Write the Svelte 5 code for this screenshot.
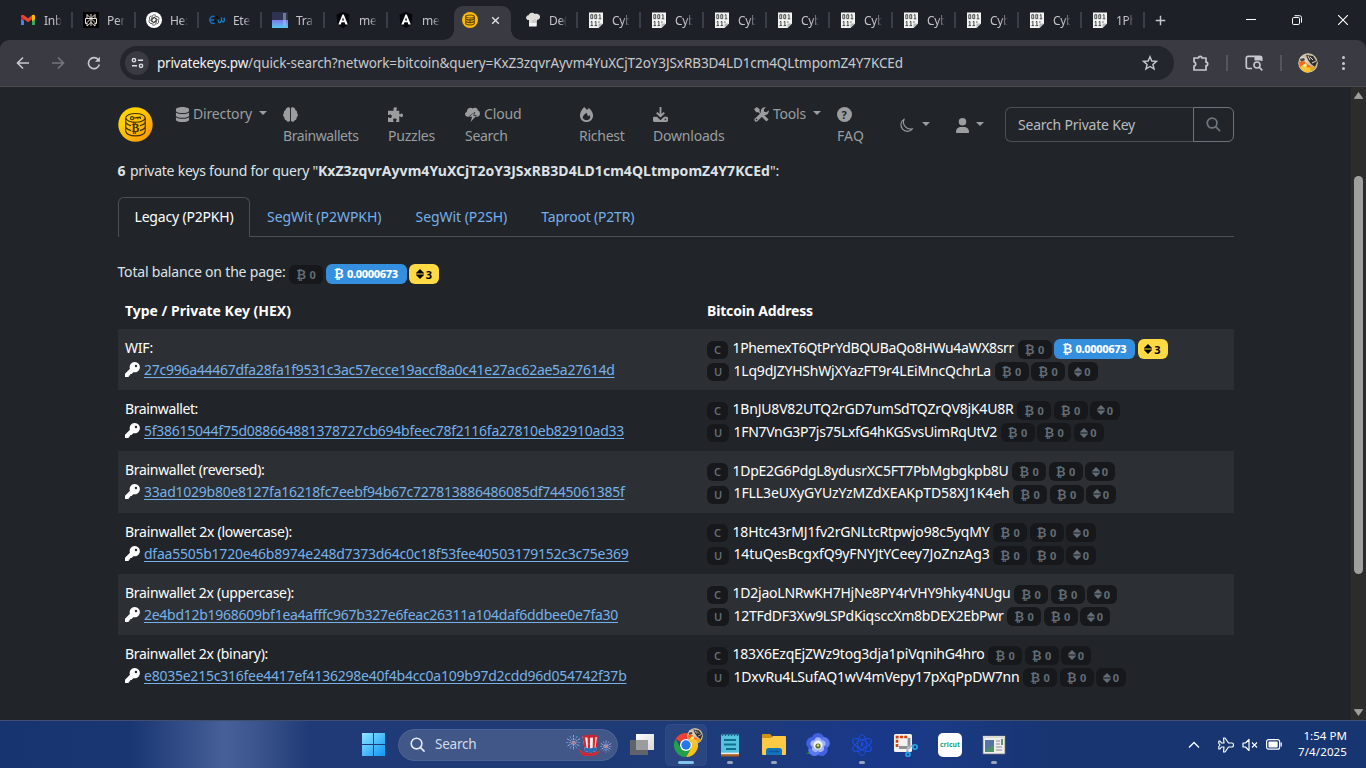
<script>
  // Sets letter spacing so that a label occupies the given advance width.
  function fit(node, width) {
    const n = [...node.textContent].length;
    const natural = node.getBoundingClientRect().width;
    node.style.letterSpacing = (width - natural) / n + 'px';
    node.style.width = width + 'px';
  }

  const leftTabs = [
    ['gmail', 'Inb'], ['perp', 'Per'], ['gpt', 'He:'], ['ete', 'Ete'],
    ['tra', 'Tra'], ['ang', 'me'], ['ang', 'me']
  ];
  const rightTabs = [
    ['chef', 'De('], ...Array(8).fill(['bin', 'Cyb']), ['bin', '1Ph']
  ];
  const rows = [
    { t: 'WIF:', tw: 28, h: '27c996a44467dfa28fa1f9531c3ac57ecce19accf8a0c41e27ac62ae5a27614d', hw: 470.5, c: '1PhemexT6QtPrYdBQUBaQo8HWu4aWX8srr', cw: 281.5, u: '1Lq9dJZYHShWjXYazFT9r4LEiMncQchrLa', uw: 257.5, hot: true },
    { t: 'Brainwallet:', tw: 73, h: '5f38615044f75d088664881378727cb694bfeec78f2116fa27810eb82910ad33', hw: 480, c: '1BnJU8V82UTQ2rGD7umSdTQZrQV8jK4U8R', cw: 281, u: '1FN7VnG3P7js75LxfG4hKGSvsUimRqUtV2', uw: 263.5 },
    { t: 'Brainwallet (reversed):', tw: 139.5, h: '33ad1029b80e8127fa16218fc7eebf94b67c727813886486085df7445061385f', hw: 480.5, c: '1DpE2G6PdgL8ydusrXC5FT7PbMgbgkpb8U', cw: 276, u: '1FLL3eUXyGYUzYzMZdXEAKpTD58XJ1K4eh', uw: 276 },
    { t: 'Brainwallet 2x (lowercase):', tw: 167, h: 'dfaa5505b1720e46b8974e248d7373d64c0c18f53fee40503179152c3c75e369', hw: 484.5, c: '18Htc43rMJ1fv2rGNLtcRtpwjo98c5yqMY', cw: 257, u: '14tuQesBcgxfQ9yFNYJtYCeey7JoZnzAg3', uw: 256 },
    { t: 'Brainwallet 2x (uppercase):', tw: 169, h: '2e4bd12b1968609bf1ea4afffc967b327e6feac26311a104daf6ddbee0e7fa30', hw: 474, c: '1D2jaoLNRwKH7HjNe8PY4rVHY9hky4NUgu', cw: 278, u: '12TFdDF3Xw9LSPdKiqsccXm8bDEX2EbPwr', uw: 270 },
    { t: 'Brainwallet 2x (binary):', tw: 143, h: 'e8035e215c316fee4417ef4136298e40f4b4cc0a109b97d2cdd96d054742f37b', hw: 482.5, c: '183X6EzqEjZWz9tog3dja1piVqnihG4hro', cw: 252, u: '1DxvRu4LSufAQ1wV4mVepy17pXqPpDW7nn', uw: 286 }
  ];
  const nav = [
    ['db', 'Directory', 59, '', 0, true], ['brain', '', 0, 'Brainwallets', 75.5],
    ['puzzle', '', 0, 'Puzzles', 47], ['cloud', 'Cloud', 37.5, 'Search', 42.5],
    ['fire', '', 0, 'Richest', 45.5], ['down', '', 0, 'Downloads', 71.5],
    ['tools', 'Tools', 33, '', 0, true], ['help', '', 0, 'FAQ', 27]
  ];
  const apps = ['task', 'chrome', 'note', 'folder', 'flower', 'atom', 'snip', 'cricut', 'window'];
  const running = ['note', 'folder', 'atom', 'window'];
</script>

{#snippet favicon(k)}
  <svg class="fav" viewBox="0 0 16 16">
    {#if k === 'gmail'}
      <path d="M1 3.5V13h3V7z" fill="#4285f4" /><path d="M15 3.5V13h-3V7z" fill="#34a853" />
      <path d="M1 4.5V7l3 2.2V5z" fill="#c5221f" /><path d="M15 4.5V7l-3 2.2V5z" fill="#fbbc04" />
      <path d="M1 4.6C1 2.5 2.8 2.2 4 3.2L8 6.2l4-3c1.200-1 3-.7 3 1.400L12 7.200 8 10.200 4 7.200z" fill="#ea4335" />
      <path d="M12 3.200c1.200-1 3-.7 3 1.400V7l-3 2.200z" fill="#fbbc04" />
    {:else if k === 'perp'}
      <path d="M0 0h16v16H0z" fill="#000" />
      <path d="M8 2v12M4 2.500l4 4 4-4v4H4zM4 6.500H2.500v5H4M12 6.500h1.500v5H12M8 6.500l-4 4v3.500l4-3.500 4 3.500v-3.500z" fill="none" stroke="#e8e0d4" stroke-width="1" />
    {:else if k === 'gpt'}
      <circle cx="8" cy="8" r="8" fill="#fff" />
      <g fill="none" stroke="#333" stroke-width=".75">
        {#each [0, 60, 120, 180, 240, 300] as a}<path transform="rotate({a} 8 8)" d="M6 8V5a2.300 2.300 0 0 1 4.200-1.200M6 8V6.700l3-1.700" />{/each}
      </g>
    {:else if k === 'ete'}
      <path d="M5.500 4.500C3 3.500.8 5.500.8 8s2.500 4.300 5 3M1 8h4" fill="none" stroke="#1972b8" stroke-width="1.400" />
      <path d="M6.500 6C8 3.500 9.500 5 9 8s-3 3-2.500 0" fill="none" stroke="#0c1119" stroke-width="1.400" />
      <path d="M15 5.500c1 4-1 6-2.500 3C11 12 9 11 9 7.500M12.500 5.500v3" fill="none" stroke="#1680c8" stroke-width="1.300" />
    {:else if k === 'tra'}
      <defs><linearGradient id="tg" x2="0" y2="1"><stop stop-color="#7c78ee" /><stop offset="1" stop-color="#55cbee" /></linearGradient></defs>
      <path d="M0 0h16v8H0z" fill="#2e3450" /><path d="M0 8h16v8H0z" fill="url(#tg)" /><path d="M11 1h3v13h-3z" fill="#b7bdd7" opacity=".5" />
    {:else if k === 'ang'}
      <path d="M8 0l6.500 2.500-1 10L8 16l-5.500-3.500-1-10z" fill="#05070b" />
      <path d="M7.500 2.500h1.300l4 10h-2.400L9.600 10.300H6.500l-.8 2.200H3.300l4.200-10zM8 5.300L7.100 8.400h1.900z" fill="#fff" fill-rule="evenodd" />
    {:else if k === 'coin'}
      <circle cx="8" cy="8" r="8" fill="#fdbb08" />
      <g fill="none" stroke="#5f4400" stroke-width="1.100"><ellipse cx="8" cy="4.500" rx="4.300" ry="1.500" /><path d="M3.700 4.500v7c1 2 7.600 2 8.600 0v-7M4 7c2 1.500 6 1.500 8 0M4 9.500c2 1.500 6 1.500 8 0M8 7v4" /></g>
    {:else if k === 'chef'}
      <path d="M4 14V8C.5 8.500 0 3.500 3.500 3.200 5 .2 8.500.3 9.500 2c3-1 6.200 1 5.500 3.500-.5 2-2 2.500-3 2.300L11.500 14z" fill="#deddd9" /><path d="M4 11h7.500v3.500H4z" fill="#f3f3f3" />
      <path d="M8 8v3M10 7v4" stroke="#aaa" stroke-width=".6" />
    {:else}
      <path d="M1 .5h14v11L10.500 16H1z" fill="#f4f5f2" /><path d="M10.500 16v-4.500H15z" fill="#b4baba" />
      <g fill="none" stroke="#343a3c" stroke-width=".9"><path d="M2.800 2.700h1.900v4H2.800zM6.800 2.700h1.900v4H6.800zM10.800 3.200l1.200-.7V6.700M10.700 6.800h2.600M2.700 10l1.200-.7V13.500M2.500 13.600h2.600M6.700 10l1.200-.7V13.500M6.500 13.600h2.600M10.900 9.300v1.500" /></g>
    {/if}
  </svg>
{/snippet}

{#snippet ni(k)}
  <svg class="ni" viewBox="0 0 16 16" fill="currentColor">
    {#if k === 'db'}
      <path d="M15 2.500V4c0 1.400-3.100 2.500-7 2.500S1 5.400 1 4V2.500C1 1.100 4.100 0 8 0s7 1.100 7 2.500zM15 5.800V9c0 1.400-3.100 2.500-7 2.500S1 10.400 1 9V5.800c3 2.200 11 2.200 14 0zM15 10.800v2.700c0 1.400-3.100 2.500-7 2.500s-7-1.100-7-2.500v-2.700c3 2.200 11 2.200 14 0z" />
    {:else if k === 'brain'}
      <path d="M7.500 1.500v13c0 1.200-2.700 2-3.800-.2C2 14 1.200 12.600 1.500 11.100-.3 10-.2 7.600 1 6.700.6 5 1.500 3.700 2.800 3.200 3-.1 7.200-.8 7.500 1.500zM8.500 1.500v13c0 1.200 2.700 2 3.800-.2 1.700-.3 2.500-1.700 2.200-3.200 1.800-1.100 1.700-3.500.5-4.400.4-1.700-.5-3-1.800-3.500C13-.1 8.800-.8 8.500 1.500z" />
    {:else if k === 'puzzle'}
      <path d="M6 3C4.500.5 9.500-.8 9.500 1.700 9.500 2.800 8.700 3 9 4h3v3.500c1 .5 1.500-.7 2.500-.7 2 0 2 4 0 4-1 0-1.500-1.200-2.500-.7V16H8.500c-.3-1.200.8-1.300.8-2.300 0-2-4-2-4 0 0 1 1 1.100.7 2.300H0v-5c1-.5 1.500.8 2.500.8C4.500 11.800 4.500 8 2.500 8 1.500 8 1 9 0 8.500V4h6z" />
    {:else if k === 'cloud'}
      <path d="M4 10.500C-1 11-.8 5.300 2 5.200 1.500 1.500 6-.5 8 1.500c4-1.800 6 .7 5.500 2.200 3.500.5 3.200 6.300-.5 6.800l-1.500.2 1-2.200H9.800L11 5 5 9l-.5 1.500z" /><path d="M9.500 6l-5 4.500h3L6 16l6-6.700H9z" />
    {:else if k === 'fire'}
      <path fill-rule="evenodd" d="M5.500 0c1.300 1 2.300 2 3 3.200L10.500 1C13.500 3.500 15 6.500 15 9c0 4-3 7-7 7s-7-3-7-7c0-3 2-6.500 4.500-9zM8 6C5.500 8 4 9.500 4 11c0 4 8 4 8 0 0-1-.5-2-1-2.500L9.700 10z" />
    {:else if k === 'down'}
      <path d="M7 0h2v7.500l2.300-2.300 1.400 1.400L8 11.300 3.300 6.600l1.400-1.400L7 7.500z" /><path fill-rule="evenodd" d="M1.500 10.500h2.700L8 14l3.800-3.500h2.700c1 0 1.500.7 1.500 1.500v2.500c0 1-.5 1.500-1.500 1.500h-13C.5 16 0 15.500 0 14.500V12c0-1 .5-1.500 1.500-1.500zM12.500 12.500v1.500H14v-1.500z" />
    {:else if k === 'tools'}
      <path d="M3 0l3 2.500V5l3 3 1-.3 5.500 5.500-2.300 2.300L8 10.200V8.500L4.700 5.500H2.500L0 2.500z" /><path d="M15.700 3.500A4.500 4.500 0 0 1 10 8.700l-6.300 6.600A2.100 2.100 0 0 1 .7 12.500L7.500 6A4.400 4.400 0 0 1 12.700.3L10.400 2.700l.5 2.400 2.400.5z" /><path d="M1.700 13.300l1-1 1 1-1 1z" fill="#212529" />
    {:else}
      <circle cx="8" cy="8" r="8" />
    {/if}
  </svg>
{/snippet}

{#snippet key()}
  <svg class="key" viewBox="0 0 16 16"><path fill="#fff" fill-rule="evenodd" d="M10.500 0a5.400 5.400 0 0 0-5.200 7.200L0 12.500V16h4v-1.700h1.500v-1.500H7l1.900-2A5.500 5.500 0 1 0 10.500 0zm1.200 3a1.300 1.300 0 1 1 0 2.600 1.300 1.300 0 0 1 0-2.600z" /></svg>
{/snippet}

{#snippet updown()}
  <svg class="ud" viewBox="0 0 8 10"><path fill="currentColor" d="M4 0l4 4v.6H0V4zM4 10L0 6v-.6h8V6z" /></svg>
{/snippet}

{#snippet badges(hot)}
  <span class="badge"><i>₿</i>0</span>
  <span class="badge" class:blue={hot}><i>₿</i>{hot ? '0.0000673' : '0'}</span>
  <span class="badge small" class:yellow={hot}>{@render updown()}{hot ? '3' : '0'}</span>
{/snippet}

{#snippet face()}
  <svg class="face" viewBox="0 0 20 20">
    <circle cx="10" cy="10" r="10" fill="#c9bca3" />
    <path d="M3 3l7 3 1 5-5-2-5 3z" fill="#d9d2c2" /><path d="M2 6l4-1 1 2-4 2z" fill="#4a4440" /><path d="M8 2l7 1 4 6-2 5-4-3-3-4z" fill="#312d2a" />
    <path d="M1 9l5-1 4 4 3 1-2 5-5-1-4-3z" fill="#f36a1c" /><path d="M2 14l4-3 3 3 5 1-2 4-5 1z" fill="#fbc62b" />
    <path d="M5 12l3-2 1 3-3 1z" fill="#fff0a0" /><path d="M13 13l5 1-3 4-3-1z" fill="#d9a52f" /><path d="M12 4l3 3M14 10l4-2M10 3l2 4" stroke="#d8d8d8" />
  </svg>
{/snippet}

<div class="screen">
  <header class="strip">
    {#each leftTabs as [k, t]}
      <div class="tab">{@render favicon(k)}<span>{t}</span></div>
    {/each}
    <div class="tab active">
      {@render favicon('coin')}
      <svg class="x" viewBox="0 0 10 10"><path d="M1.300 1.300l7.400 7.400M8.700 1.300L1.300 8.700" stroke="#dfe1e5" stroke-width="1.500" /></svg>
    </div>
    {#each rightTabs as [k, t]}
      <div class="tab">{@render favicon(k)}<span>{t}</span></div>
    {/each}
    <svg class="plus" viewBox="0 0 12 12"><path d="M6 .8v10.400M.8 6h10.400" stroke="#c4c7cc" stroke-width="1.600" /></svg>
    <div class="win">
      <svg viewBox="0 0 10 10"><path d="M0 4.500h10" stroke="#fff" /></svg>
      <svg viewBox="0 0 10 10" fill="none" stroke="#fff"><rect x=".5" y="2.500" width="7" height="7" rx="1.300" /><path d="M2.500.7h5q2 0 2 2v5" /></svg>
      <svg viewBox="0 0 10 10"><path d="M0 0l10 10M10 0L0 10" stroke="#fff" stroke-width="1.100" /></svg>
    </div>
  </header>

  <div class="toolbar">
    <svg class="tb back" viewBox="0 0 14 14"><path d="M13 7H2M7 1.500L1.500 7 7 12.500" fill="none" stroke="#c7c9d0" stroke-width="1.600" /></svg>
    <svg class="tb fwd" viewBox="0 0 14 14"><path d="M1 7h11M7 1.500L12.500 7 7 12.500" fill="none" stroke="#75767c" stroke-width="1.600" /></svg>
    <svg class="tb rel" viewBox="0 0 14 14"><path d="M12.300 8.500A5.500 5.500 0 1 1 11.500 4" fill="none" stroke="#c7c9d0" stroke-width="1.600" /><path d="M12.900.8v5H8z" fill="#c7c9d0" /></svg>
    <div class="omni">
      <div class="site"><svg viewBox="0 0 14 12" fill="none" stroke="#dcdee3" stroke-width="1.500"><circle cx="3.200" cy="3" r="1.800" /><path d="M7.500 3H13M1 9h5.500" /><circle cx="10.800" cy="9" r="1.800" /></svg></div>
      <div class="url"><span class="host" use:fit={91}>privatekeys.pw</span><span use:fit={655}>/quick-search?network=bitcoin&amp;query=KxZ3zqvrAyvm4YuXCjT2oY3JSxRB3D4LD1cm4QLtmpomZ4Y7KCEd</span></div>
      <svg class="star" viewBox="0 0 16 16"><path d="M8 1.700l1.800 4.300 4.700.4-3.600 3 1.200 4.600L8 11.500 3.900 14l1.200-4.600-3.600-3L6.200 6z" fill="none" stroke="#c7c9d0" stroke-width="1.400" /></svg>
    </div>
    <svg class="ext" viewBox="0 0 18 18"><path d="M2 4h4.500a1.700 1.700 0 0 1 3.400 0H14v4.200a1.700 1.700 0 0 1 0 3.400V16H2v-3.900a2.200 2.200 0 0 0 0-4.300z" fill="none" stroke="#c7c9d0" stroke-width="1.700" stroke-linejoin="round" /></svg>
    <i class="div"></i>
    <svg class="lens" viewBox="0 0 18 16"><path d="M7 13.500H3A1.700 1.700 0 0 1 1.300 12V3A1.700 1.700 0 0 1 3 1.300h12A1.700 1.700 0 0 1 16.700 3v3" fill="none" stroke="#c7c9d0" stroke-width="1.700" /><path d="M9.500 1H17v4.500H9.500z" fill="#c7c9d0" /><circle cx="12" cy="10" r="3" fill="none" stroke="#c7c9d0" stroke-width="1.600" /><path d="M14 12l3.300 3.300" stroke="#c7c9d0" stroke-width="1.700" /></svg>
    <i class="div two"></i>
    <div class="avatar">{@render face()}</div>
    <div class="dots"><b></b><b></b><b></b></div>
  </div>

  <div class="view">
    <main>
      <nav>
        <svg class="logo" viewBox="0 0 36 36">
          <defs><linearGradient id="lg" x2="1" y2="1"><stop offset=".3" stop-color="#ffcf00" /><stop offset="1" stop-color="#ff8f08" /></linearGradient></defs>
          <circle cx="18" cy="18" r="17.700" fill="url(#lg)" />
          <g fill="none" stroke="#40300a" stroke-width="1.200"><ellipse cx="18" cy="11.200" rx="10" ry="4.500" /><path d="M8 11.200v14c2 6 18 6 20 0v-14M8 16c1 1.500 3 2.700 5.500 3.300M28 16c-1 1.500-3 2.700-5.500 3.300M8 21c1 1.500 3 2.700 5.500 3.300M28 21c-1 1.500-3 2.700-5.500 3.300" /><circle cx="14.500" cy="11.500" r="1.600" /><path d="M16 11.500l7-1v1.800M20.500 11v1.500" /></g>
          <text x="18" y="26" text-anchor="middle" font-size="12" font-weight="700" font-family="DejaVu Sans" fill="#40300a">₿</text>
        </svg>
        {#each nav as [k, a, aw, b, bw, caret]}
          <div class="item {k}">
            <div class="l1"><span class="ib">{@render ni(k)}{#if k === 'help'}<em>?</em>{/if}</span>{#if a}<span use:fit={aw}>{a}</span>{/if}{#if caret}<i class="caret"></i>{/if}</div>
            {#if b}<div class="l2"><span use:fit={bw}>{b}</span></div>{/if}
          </div>
        {/each}
        <div class="ic moon"><svg viewBox="0 0 16 16"><path d="M5.500 1.200A7 7 0 1 0 14.600 11.500 7.500 7.500 0 0 1 5.500 1.200z" fill="none" stroke="currentColor" stroke-width="1.200" stroke-linejoin="round" /></svg><i class="caret"></i></div>
        <div class="ic user"><svg viewBox="0 0 16 16" fill="currentColor"><circle cx="8" cy="4" r="4" /><path d="M1 15c0-3.500 2.500-5.500 5.500-5.500h3c3 0 5.500 2 5.500 5.500 0 .6-.4 1-1 1H2c-.6 0-1-.4-1-1z" /></svg><i class="caret"></i></div>
        <div class="search"><div class="field"><span use:fit={117}>Search Private Key</span></div><div class="go"><svg viewBox="0 0 16 16" fill="none" stroke="#6c757d" stroke-width="1.900"><circle cx="6.500" cy="6.500" r="5.200" /><path d="M10.300 10.300L15 15" /></svg></div></div>
      </nav>

      <p class="found"><b use:fit={8.5}>6</b><span class="mid" use:fit={188}>private keys found for query "</span><b use:fit={452}>KxZ3zqvrAyvm4YuXCjT2oY3JSxRB3D4LD1cm4QLtmpomZ4Y7KCEd</b><span use:fit={9}>":</span></p>

      <div class="tabs">
        <div class="pt on"><span use:fit={99}>Legacy (P2PKH)</span></div>
        <div class="pt"><span use:fit={114.500}>SegWit (P2WPKH)</span></div>
        <div class="pt"><span use:fit={91.750}>SegWit (P2SH)</span></div>
        <div class="pt"><span use:fit={93}>Taproot (P2TR)</span></div>
      </div>

      <div class="total"><span class="tt" use:fit={168}>Total balance on the page:</span>{@render badges(true)}</div>

      <div class="thead"><div><b use:fit={166}>Type / Private Key (HEX)</b></div><div><b use:fit={106}>Bitcoin Address</b></div></div>
      <div class="rows">
        {#each rows as r}
          <div class="row">
            <div class="kcol">
              <div class="ln"><span use:fit={r.tw}>{r.t}</span></div>
              <div class="ln">{@render key()}<a href="#key" use:fit={r.hw}>{r.h}</a></div>
            </div>
            <div class="acol">
              <div class="ln"><span class="badge cu">C</span><span class="ad" use:fit={r.cw}>{r.c}</span>{@render badges(r.hot)}</div>
              <div class="ln"><span class="badge cu u">U</span><span class="ad" use:fit={r.uw}>{r.u}</span>{@render badges(false)}</div>
            </div>
          </div>
        {/each}
      </div>
    </main>
    <div class="scroll">
      <svg viewBox="0 0 9 7"><path d="M4.500.5L8.700 6.500H.3z" fill="#9f9f9f" stroke="#9f9f9f" stroke-linejoin="round" stroke-width=".8" /></svg>
      <div class="thumb"></div>
      <svg class="dn" viewBox="0 0 9 7"><path d="M4.500 6.500L8.700.5H.3z" fill="#9f9f9f" stroke="#9f9f9f" stroke-linejoin="round" stroke-width=".8" /></svg>
    </div>
  </div>

  <footer>
    <svg class="start" viewBox="0 0 23 23">
      <defs><linearGradient id="wg" x2="1" y2="1"><stop stop-color="#8fe6ff" /><stop offset="1" stop-color="#0f94f4" /></linearGradient></defs>
      <path d="M0 0h11v11H0zM12 0h11v11H12zM0 12h11v11H0zM12 12h11v11H12z" fill="url(#wg)" />
    </svg>
    <div class="tsearch">
      <svg class="mag" viewBox="0 0 16 16" fill="none" stroke="#e6eaf3" stroke-width="1.700"><circle cx="7" cy="7" r="5.700" /><path d="M11 11l4 4" stroke-linecap="round" /></svg>
      <span use:fit={41.500}>Search</span>
      <svg class="hat" viewBox="0 0 48 22">
        {#each [[8.500, 8.500, 7.500], [41, 12.500, 6]] as [x, y, r]}
          {#each [0, 30, 60, 90, 120, 150] as a}<path transform="rotate({a} {x} {y})" d="M{x - r} {y}h{2 * r}" stroke={a % 60 ? '#a8bce8' : '#7894d4'} stroke-width=".8" stroke-dasharray="2.200 .7" />{/each}
          <circle cx={x} cy={y} r="1.200" fill="#e87878" />
        {/each}
        <path d="M14 15c3 6 17 6 21 1l-3 4c-4 2.500-12 2.500-15 .5z" fill="#c72431" stroke="#d8303a" />
        <path d="M17.500 2.500c4-1.500 12-1.500 15.500 0L31 17c-3 1.500-8 1.500-11 0z" fill="#f4eeee" />
        <path d="M17.500 2.500l2.500 0 1.500 11h-2.300zM22.500 2h2.500v12h-2zM28 2h2.500l-1 12h-1.800zM32 2.300h1.500L32 13.500h-1.500z" fill="#d92631" />
        <path d="M19.300 13c3 1.500 9 1.500 12.500 0l-.6 4c-3 1.500-8.500 1.500-11.400 0z" fill="#2b68b5" /><ellipse cx="25.300" cy="2.300" rx="7.800" ry="1.500" fill="#c52430" />
      </svg>
    </div>
    {#each apps as k}
      <div class="app {k}">
        <svg viewBox="0 0 24 24">
          {#if k === 'task'}
            <defs><linearGradient id="vg" x2="1" y2="1"><stop stop-color="#fff" /><stop offset="1" stop-color="#d8d8d8" /></linearGradient></defs>
            <path d="M0 7h18v15H0z" fill="#60636a" /><path d="M6 1h18v16H6z" fill="url(#vg)" /><path d="M6 7h12v10H6z" fill="#9b9c9e" />
          {:else if k === 'chrome'}
            <path d="M12 12L1.600 6A12 12 0 0 1 22.400 6z" fill="#ea4335" /><path d="M22.400 6A12 12 0 0 1 12 24l5-9L12 6z" fill="#fbc116" /><path d="M1.600 6A12 12 0 0 0 12 24l5.200-9H6.800z" fill="#229f4b" />
            <circle cx="12" cy="12" r="6" fill="#fff" /><circle cx="12" cy="12" r="4.700" fill="#2678e8" />
          {:else if k === 'note'}
            <path d="M3 1.500h18V21H3z" fill="#56c3de" /><path d="M3 21h18v2.500H3z" fill="#a85c20" /><path d="M3 19.700h18v1.500H3z" fill="#eee" /><path d="M4.500 0v3M7.500 0v3M10.500 0v3M13.500 0v3M16.500 0v3M19.500 0v3" stroke="#1d5c84" stroke-width="1.200" /><path d="M6 7h12M6 11.500h12M8 16h10" stroke="#126e91" stroke-width="1.800" />
          {:else if k === 'folder'}
            <path d="M0 2q0-1 1-1h7l2 2v5H0z" fill="#d69010" /><path d="M0 5h9l2-2h12q1 0 1 1v17q0 1-1 1H1q-1 0-1-1z" fill="#fdca46" /><path d="M4 22v-4.500Q4 15 6.500 15h11q2.500 0 2.500 2.500V22z" fill="#1473bd" /><path d="M7 18.500h10" stroke="#0c5998" stroke-width="1.500" />
          {:else if k === 'flower'}
            <path d="M0 21l6-5 3 5zM14 23l3-4 1 4z" fill="#297b46" />
            {#each [0, 72, 144, 216, 288] as a}<ellipse transform="rotate({a} 12 12)" cx="12" cy="5.500" rx="6" ry="5.500" fill={a % 144 ? '#5a78ef' : '#4160e2'} />{/each}
            {#each [0, 72, 144, 216, 288] as a}<ellipse transform="rotate({a} 12 12)" cx="12" cy="8" rx="3.500" ry="3.800" fill="#a3b6fa" />{/each}
            <circle cx="12" cy="12" r="4.500" fill="#eef2ee" /><circle cx="12" cy="13" r="2.600" fill="#526f39" /><circle cx="12" cy="12.500" r="1.200" fill="#e7d760" />
          {:else if k === 'atom'}
            <g fill="none" stroke="#1c4fe0" stroke-width="1"><ellipse cx="12" cy="12" rx="10.500" ry="4.500" transform="rotate(90 12 12)" /><ellipse cx="12" cy="12" rx="10.500" ry="4.500" transform="rotate(30 12 12)" /><ellipse cx="12" cy="12" rx="10.500" ry="4.500" transform="rotate(150 12 12)" /></g><path d="M12 7l4.500 1.500v4L12 17l-4.500-4.500v-4z" fill="#1d3a91" stroke="#1c4fe0" /><path d="M10.800 9.500h2.400v3.800h-2.400z" fill="#1c4fe0" />
          {:else if k === 'snip'}
            <rect width="18" height="18" y="1" rx="1.500" fill="#f4f2f1" /><path d="M3 14V4h11" fill="none" stroke="#d0410f" stroke-width="2.600" stroke-dasharray="3 1.300" /><path d="M15 5v10.500M5 14.500h10" stroke="#8d9297" stroke-width="2.800" /><path d="M14 14l6-1.500M14 14l-1 5" stroke="#b4babf" stroke-width="2" /><circle cx="21" cy="14" r="2.200" fill="none" stroke="#239ee5" stroke-width="1.800" /><circle cx="14" cy="21.500" r="2" fill="none" stroke="#239ee5" stroke-width="1.800" />
          {:else if k === 'cricut'}
            <rect width="24" height="24" rx="5" fill="#fff" /><text x="12" y="14" text-anchor="middle" font-size="6.800" font-weight="700" fill="#20a876" textLength="20">cricut</text>
          {:else}
            <path d="M1 3h22v18H1z" fill="#eeeeec" stroke="#777" stroke-width=".7" /><path d="M1 3h22v2H1z" fill="#d9d9d6" /><path d="M3 7h9v12H3z" fill="#4e9164" /><path d="M3 7h9v5l-9 5z" fill="#5675a3" /><path d="M14 8h4M14 11h4M14 14h6M14 17h6" stroke="#aeb0ad" stroke-width="1.300" /><path d="M20 6v6" stroke="#347447" stroke-width="1.500" />
          {/if}
        </svg>
        {#if k === 'chrome'}<div class="mini">{@render face()}</div>{/if}
        {#if k === 'chrome' || running.includes(k)}<i class="run" class:wide={k === 'chrome'}></i>{/if}
      </div>
    {/each}
    <div class="tray">
      <svg class="chev" viewBox="0 0 12 8"><path d="M1 6.500l5-5 5 5" fill="none" stroke="#fff" stroke-width="1.300" /></svg>
      <svg class="plane" viewBox="0 0 16 16"><path d="M6 6L5.500 1H7l3.500 5H14q1.500 0 1.500 2T14 10h-3.500L7 15H5.500L6 10H3.500L2 12H.8V9.500L2 8 .8 6.500V4H2l1.500 2z" fill="none" stroke="#fff" stroke-width="1.200" stroke-linejoin="round" /></svg>
      <svg class="spk" viewBox="0 0 16 14"><path d="M1 5h2.500L7 1.500v11L3.500 9H1z" fill="none" stroke="#fff" stroke-width="1.200" stroke-linejoin="round" /><path d="M10 4.500l5 5M15 4.500l-5 5" stroke="#fff" stroke-width="1.100" /></svg>
      <svg class="bat" viewBox="0 0 16 11"><rect x=".6" y=".6" width="13" height="9.600" rx="2" fill="none" stroke="#fff" stroke-width="1.200" /><rect x="2.500" y="2.500" width="9.200" height="5.900" rx=".6" fill="#fff" /><path d="M15.200 3.500v4" stroke="#fff" stroke-width="1.300" /></svg>
      <div class="clock"><span use:fit={43.500}>1:54 PM</span><span use:fit={49}>7/4/2025</span></div>
    </div>
  </footer>
</div>

<style>
  :global(body) { margin: 0; overflow: hidden; background: #212529; }
  .screen { width: 1366px; height: 768px; display: flex; flex-direction: column; overflow: hidden; font-family: "Noto Sans", "Open Sans", sans-serif; font-size: 14px; color: #dee2e6; background: #1d2027; }
  svg { display: block; flex: none; }
  span, b, a { display: inline-block; white-space: nowrap; }
  .strip { height: 40px; display: flex; align-items: center; padding-left: 9px; background: #1d2027; flex: none; }
  .tab { width: 63px; height: 40px; box-sizing: border-box; padding-left: 11px; display: flex; align-items: center; gap: 8px; position: relative; flex: none; }
  .tab::after { content: ""; position: absolute; right: -1px; top: 12px; width: 2px; height: 16px; background: #3b3e46; }
  .tab:nth-child(7)::after { display: none; }
  .fav { width: 16px; height: 16px; }
  .tab > span { width: 25px; flex: none; font-size: 12px; letter-spacing: -0.3px; color: #c3c5ca; -webkit-mask-image: linear-gradient(90deg, #000 11px, transparent 18px); mask-image: linear-gradient(90deg, #000 11px, transparent 18px); }
  .active { width: 57px; height: 34px; margin: 6px 3px 0 4px; padding-left: 8px; gap: 13px; background: #3a3b42; border-radius: 9px 9px 0 0; }
  .active::before { content: ""; position: absolute; left: -10px; bottom: 0; width: 10px; height: 10px; background: radial-gradient(circle at 0 0, transparent 9.500px, #3a3b42 10px); }
  .active::after { right: -10px; top: auto; bottom: 0; width: 10px; height: 10px; background: radial-gradient(circle at 100% 0, transparent 9.500px, #3a3b42 10px); }
  .active .fav { margin-top: -6px; }
  .x { width: 9px; height: 9px; margin-top: -6px; }
  .plus { width: 11px; height: 11px; margin-left: 11px; }
  .win { display: flex; gap: 36px; margin-left: auto; padding-right: 18px; }
  .win svg { width: 10px; height: 10px; }
  .toolbar { height: 47px; box-sizing: border-box; flex: none; display: flex; align-items: center; padding: 0 16px; background: #3a3b42; border-radius: 9px 9px 0 0; border-bottom: 1px solid #4b494c; }
  .tb { width: 14px; height: 14px; }
  .fwd { margin-left: 21px; }
  .rel { margin-left: 22px; }
  .omni { width: 1054px; height: 34px; margin-left: 19px; display: flex; align-items: center; background: #24262d; border-radius: 17px; flex: none; }
  .site { width: 24px; height: 24px; border-radius: 12px; margin-left: 5px; background: #393a42; display: flex; align-items: center; justify-content: center; }
  .site svg { width: 13px; height: 12px; }
  .url { margin-left: 8px; display: flex; color: #c8cace; font-size: 13.500px; line-height: 20px; }
  .host { color: #f1f2f4; }
  .star { width: 16px; height: 16px; margin-left: auto; margin-right: 16px; }
  .ext { width: 18px; height: 18px; margin-left: 18px; }
  .div { width: 2px; height: 16px; background: #55565d; margin-left: 16px; }
  .div.two { margin-left: 17px; }
  .lens { width: 18px; height: 16px; margin-left: 17px; }
  .avatar { margin-left: 16px; }
  .face { width: 20px; height: 20px; border-radius: 50%; }
  .dots { display: flex; flex-direction: column; gap: 2.500px; margin-left: 24px; }
  .dots b { width: 3px; height: 3px; border-radius: 2px; background: #c7c9d0; }

  .view { height: 633px; flex: none; display: flex; background: #212529; }
  main { width: 1116px; margin-left: 118px; }
  nav { height: 75px; display: grid; grid-template-columns: 57px 108px 105px 77px 114px 74px 101px 83px 62px 56px 50px 229px; color: #9b9d9f; }
  .logo { width: 35px; height: 35px; margin-top: 20px; }
  .item { padding-top: 16px; line-height: 22px; }
  .l1 { height: 22px; display: flex; align-items: center; }
  .ib { position: relative; width: 15px; height: 15px; margin-right: 3px; }
  .ib em { position: absolute; inset: 0; text-align: center; font: 700 11px/15px "Noto Sans", sans-serif; color: #212529; }
  .ni { width: 15px; height: 15px; }
  .cloud .ib, .tools .ib { margin-right: 4px; }
  .help .ib, .brain .ib { margin-left: -0.500px; }
  .caret { border: 4px solid transparent; border-top-color: currentColor; border-bottom: 0; margin: -2px 0 0 7px; }
  .ic { height: 22px; margin-top: 27px; display: flex; align-items: center; }
  .ic svg { width: 15px; height: 15px; }
  .ic .caret { margin-left: 8px; }
  .user .caret { margin-left: 6px; }
  .search { height: 35px; margin-top: 20px; display: flex; box-sizing: border-box; }
  .field { width: 188px; box-sizing: border-box; border: 1px solid #495057; border-right: 0; border-radius: 6px 0 0 6px; padding-left: 12px; line-height: 34px; color: #b9bcc0; }
  .go { width: 41px; box-sizing: border-box; border: 1px solid #6c757d; border-radius: 0 6px 6px 0; display: grid; place-items: center; }
  .go svg { width: 15px; height: 15px; }
  .found { margin: 0 0 0 -0.500px; height: 35px; display: flex; line-height: 17px; white-space: pre; }
  .found b { font-weight: 700; }
  .mid { margin-left: 4px; }
  .tabs { height: 40px; box-sizing: border-box; display: flex; border-bottom: 1px solid #495057; }
  .pt { height: 40px; box-sizing: border-box; padding: 0 17px; line-height: 40px; color: #76b0ea; }
  .pt.on { width: 132px; color: #fff; background: #212529; border: 1px solid #495057; border-bottom: 0; border-radius: 6px 6px 0 0; padding: 0 0 0 15.500px; line-height: 38px; }
  .total { height: 20px; margin-top: 27px; display: flex; align-items: center; }
  .tt { line-height: 20px; margin: -4px 3.500px 0 -0.500px; }
  .badge { box-sizing: border-box; width: 34px; height: 19px; margin: 0 2.500px 0 0; border-radius: 6px; background: #16181b; color: #636c74; font-size: 11px; font-weight: 700; line-height: 19px; text-align: center; flex: none; }
  .badge i { font-family: "DejaVu Sans", sans-serif; font-size: 12px; line-height: 10px; font-style: normal; font-weight: 700; margin-right: 3.500px; }
  .badge.blue { width: 81px; height: 20px; background: #348fdf; color: #fff; font-weight: 800; letter-spacing: -0.350px; }
  .badge.small { width: 30px; margin-right: 0; display: flex; align-items: center; justify-content: center; gap: 2px; }
  .badge.yellow { height: 20px; background: #ffda45; color: #000; font-weight: 700; }
  .ud { width: 8px; height: 10px; }
  .thead { height: 45px; display: grid; grid-template-columns: 582px 1fr; color: #fff; line-height: 20px; box-sizing: border-box; padding: 17px 0 0 7px; }
  .row { height: 61.200px; box-sizing: border-box; padding: 8px 0 0 7px; display: grid; grid-template-columns: 582px 1fr; color: #fff; }
  .row:nth-child(odd) { background: #2c3034; }
  .kcol .ln { height: 22px; line-height: 22px; display: flex; }
  .key { width: 15px; height: 15px; margin: 3px 4px 0 0; }
  .kcol a { color: #76b0ea; text-decoration: underline; text-underline-offset: 2px; }
  .acol { padding-top: 1px; }
  .acol .ln { height: 22.500px; display: flex; align-items: center; }
  .ad { line-height: 22px; margin: -2px 3.500px 0 4.500px; }
  .badge.cu { width: 21px; margin: 1px 0 0 0; height: 18px; line-height: 18px; font-weight: 600; }
  .badge.u { width: 22px; }
  .scroll { width: 15px; margin-left: auto; background: #2c2c2c; display: flex; flex-direction: column; align-items: center; }
  .scroll svg { width: 9px; height: 7px; margin-top: 5px; }
  .thumb { width: 9px; height: 398px; border-radius: 5px; background: #9f9f9f; margin-top: 77px; }
  .scroll .dn { margin-top: auto; margin-bottom: 4px; }

  footer { height: 48px; box-sizing: border-box; border-top: 1px solid #42506f; display: flex; align-items: center; padding: 0 19px 0 362px; background: linear-gradient(90deg, #183470 0, #1a3672 130px, #304b85 180px, #47609a 225px, #3a538c 260px, #1f3a76 310px, #1f3b76 600px, #1d3a7c 760px, #19388a 890px, #1a3a84 940px, #183572 1050px, #173570 100%); flex: none; }
  .start { width: 23px; height: 23px; }
  .tsearch { width: 220px; height: 32px; box-sizing: border-box; margin: 0 2px 0 13px; border: 1px solid #4a6294; border-radius: 16px; background: #405788; display: flex; align-items: center; padding-left: 11px; color: #d5dbe8; font-size: 13.500px; }
  .tsearch span { margin-top: -2px; }
  .mag { width: 15px; height: 15px; margin-right: 10px; }
  .hat { width: 48px; height: 22px; margin-left: auto; margin-right: 4px; }
  .app { width: 40px; height: 40px; margin: 0 2px; position: relative; display: grid; place-items: center; border-radius: 4px; }
  .app > svg { width: 24px; height: 24px; }
  .task { margin-left: 2px; }
  .chrome { background: #2b4580; box-shadow: 0 0 0 .5px #415a91; }
  .mini { position: absolute; left: 21px; top: 3px; }
  .mini .face { width: 16px; height: 16px; }
  .run { position: absolute; bottom: 1px; left: 17px; width: 6px; height: 3px; border-radius: 2px; background: #98a4bd; }
  .run.wide { left: 12px; width: 16px; background: #83c4ea; }
  .tray { margin-left: auto; display: flex; align-items: center; color: #fff; }
  .chev { width: 12px; height: 8px; margin-right: 18px; }
  .plane { width: 16px; height: 16px; }
  .spk { width: 16px; height: 14px; margin: 0 8px; }
  .bat { width: 16px; height: 11px; }
  .clock { width: 65px; display: flex; flex-direction: column; align-items: flex-end; font-size: 11.500px; line-height: 16px; margin-top: -2px; }
</style>
